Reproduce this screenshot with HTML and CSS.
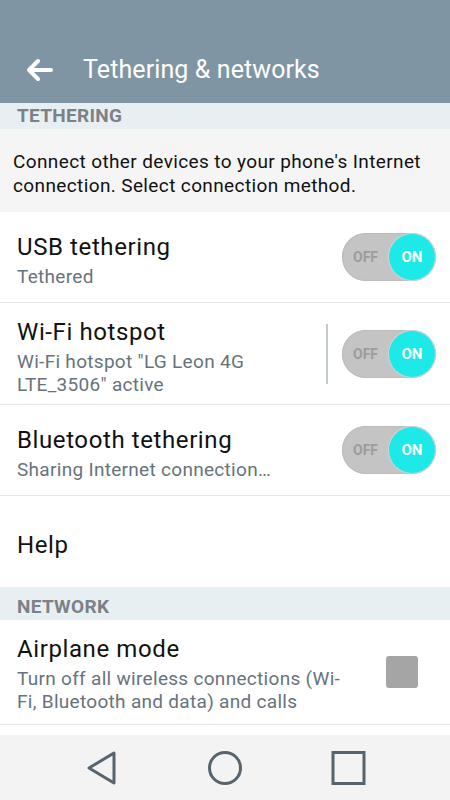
FILE: index.html
```html
<!DOCTYPE html>
<html lang="en">
<head>
  <meta charset="UTF-8" />
  <title>Tethering &amp; networks</title>
  <meta name="viewport" content="width=device-width, initial-scale=1" />
  <link rel="stylesheet" href="styles.css">
</head>
<body>
  <div class="screen">
    <div class="topbar">
      <svg class="back" width="28" height="24" viewBox="0 0 28 24">
        <path d="M26 12H4 M13 3 L4 12 L13 21" fill="none" stroke="#fff" stroke-width="4" stroke-linecap="round" stroke-linejoin="round"/>
      </svg>
      <span class="title">Tethering &amp; networks</span>
    </div>

    <div class="list">
      <div class="list-inner">
        <div class="section">TETHERING</div>
        <div class="desc">Connect other devices to your phone's Internet connection. Select connection method.</div>

        <div class="row">
          <div class="row-text">
            <div class="row-title">USB tethering</div>
            <div class="row-sub">Tethered</div>
          </div>
          <div class="toggle"><span class="off">OFF</span><span class="knob">ON</span></div>
        </div>

        <div class="row">
          <div class="row-text">
            <div class="row-title">Wi-Fi hotspot</div>
            <div class="row-sub">Wi-Fi hotspot "LG Leon 4G<br>LTE_3506" active</div>
          </div>
          <div class="divider"></div>
          <div class="toggle"><span class="off">OFF</span><span class="knob">ON</span></div>
        </div>

        <div class="row">
          <div class="row-text">
            <div class="row-title">Bluetooth tethering</div>
            <div class="row-sub">Sharing Internet connection…</div>
          </div>
          <div class="toggle"><span class="off">OFF</span><span class="knob">ON</span></div>
        </div>

        <div class="row row-last">
          <div class="row-text">
            <div class="row-title">Help</div>
          </div>
        </div>

        <div class="section">NETWORK</div>

        <div class="row row-tall">
          <div class="row-text">
            <div class="row-title">Airplane mode</div>
            <div class="row-sub">Turn off all wireless connections (Wi-<br>Fi, Bluetooth and data) and calls</div>
          </div>
          <div class="checkbox"></div>
        </div>
      </div>
    </div>

    <div class="navbar">
      <svg width="34" height="36" viewBox="0 0 34 36">
        <path d="M29 3 L4 18 L29 33 Z" fill="none" stroke="#57646d" stroke-width="3" stroke-linejoin="round"/>
      </svg>
      <svg width="36" height="36" viewBox="0 0 36 36">
        <circle cx="18" cy="18" r="15.5" fill="none" stroke="#57646d" stroke-width="3"/>
      </svg>
      <svg width="36" height="36" viewBox="0 0 36 36">
        <rect x="3" y="2.5" width="31" height="31" fill="none" stroke="#57646d" stroke-width="3"/>
      </svg>
    </div>
  </div>
</body>
</html>
```

FILE: styles.css
```css
* {
  box-sizing: border-box;
  font-family: Roboto, 'Liberation Sans', sans-serif;
}
body {
  margin: 0;
  background: #fff;
}
.screen {
  width: 450px;
  height: 800px;
  display: flex;
  flex-direction: column;
  overflow: hidden;
}
.topbar {
  height: 103px;
  flex: none;
  background: #7f95a3;
  display: flex;
  align-items: center;
  padding: 36px 0 0 25px;
}
.back {
  flex: none;
}
.title {
  color: #fff;
  font-size: 25px;
  margin-left: 30px;
  letter-spacing: 0.1px;
}
.list {
  flex: 1;
  overflow: hidden;
  background: #fff;
}
.list-inner {
  margin-top: -7px;
}
.section {
  height: 33px;
  background: #e8eff2;
  color: #7b8186;
  font-size: 19px;
  font-weight: bold;
  letter-spacing: 0.3px;
  line-height: 28px;
  padding: 6px 0 0 17px;
}
.desc {
  background: #f5f5f5;
  color: #111;
  font-size: 19px;
  letter-spacing: 0.38px;
  line-height: 24px;
  padding: 21px 6px 14px 13px;
}
.row {
  display: flex;
  align-items: center;
  min-height: 91px;
  padding: 0 14px 0 17px;
  border-bottom: 1px solid #e6e6e6;
}
.row-last {
  border-bottom: none;
}
.row-text {
  flex: 1;
  padding: 14px 0 8px;
}
.row-tall .row-text {
  padding-bottom: 11px;
}
.row-title {
  font-size: 24px;
  letter-spacing: 0.6px;
  line-height: 30px;
  color: #111;
}
.row-sub {
  font-size: 19px;
  letter-spacing: 0.3px;
  line-height: 23px;
  color: #67737c;
  margin-top: 3px;
  white-space: nowrap;
}
.divider {
  width: 2px;
  height: 60px;
  background: #c3cacf;
  margin-right: 14px;
}
.toggle {
  flex: none;
  width: 94px;
  height: 48px;
  border-radius: 24px;
  background: #c4c4c4;
  box-shadow: inset 0 0 0 1px #bcbcbc;
  display: flex;
  align-items: center;
  justify-content: space-between;
  padding: 1px;
}
.off {
  color: #9c9c9c;
  font-size: 14px;
  font-weight: bold;
  padding-left: 10px;
}
.knob {
  width: 46px;
  height: 46px;
  border-radius: 50%;
  background: #1de9e8;
  box-shadow: 0 0 0 1px #c9d7d7;
  color: #fff;
  font-size: 15px;
  font-weight: bold;
  display: flex;
  align-items: center;
  justify-content: center;
}
.checkbox {
  flex: none;
  width: 32px;
  height: 32px;
  border-radius: 3px;
  background: #a5a5a5;
  margin-right: 18px;
}
.navbar {
  flex: none;
  height: 65px;
  background: #f3f3f3;
  display: grid;
  grid-template-columns: repeat(3, 123px);
  justify-content: center;
  justify-items: center;
  align-items: center;
}
```
